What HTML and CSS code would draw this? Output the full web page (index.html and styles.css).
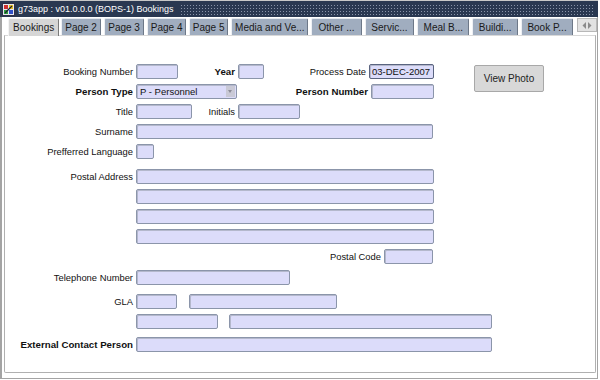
FILE: index.html
```html
<!DOCTYPE html>
<html lang="en">
<head>
    <meta charset="UTF-8">
    <title>g73app : v01.0.0.0 (BOPS-1) Bookings</title>
    <link rel="stylesheet" href="styles.css">
</head>
<body>
<div class="window">
    <div class="titlebar">
        <svg class="app-icon" width="13" height="13" viewBox="0 0 13 13">
            <rect x="0.5" y="0.5" width="12" height="12" fill="#e8e8f0" stroke="#303048"/>
            <rect x="2" y="2" width="4" height="4" fill="#d03030"/>
            <rect x="7" y="2" width="4" height="4" fill="#e8c020"/>
            <rect x="2" y="7" width="4" height="4" fill="#30a040"/>
            <rect x="7" y="7" width="4" height="4" fill="#3050c8"/>
            <path d="M3 10 L10 3" stroke="#202030" stroke-width="1.2"/>
        </svg>
        <span class="title">g73app : v01.0.0.0 (BOPS-1) Bookings</span>
        <div class="dots"></div>
    </div>

    <div class="tabs">
        <div class="tab active t-bookings">Bookings</div>
        <div class="tab t-p2">Page 2</div>
        <div class="tab t-p3">Page 3</div>
        <div class="tab t-p4">Page 4</div>
        <div class="tab t-p5">Page 5</div>
        <div class="tab t-media">Media and Ve...</div>
        <div class="tab t-other">Other ...</div>
        <div class="tab t-serv">Servic...</div>
        <div class="tab t-meal">Meal B...</div>
        <div class="tab t-build">Buildi...</div>
        <div class="tab t-book">Book P...</div>
        <div class="tab-scroll">
            <svg width="10" height="7" viewBox="0 0 10 7">
                <path d="M4 0 L0.5 3.5 L4 7 Z" fill="#8a8a8a"/>
                <path d="M6 0 L9.5 3.5 L6 7 Z" fill="#8a8a8a"/>
            </svg>
        </div>
    </div>

    <div class="panel">
        <div class="form">
            <div class="top">
                <div class="top-rows">
                    <div class="row">
                        <label class="lbl">Booking Number</label>
                        <span class="field w-booking"></span>
                        <label class="lbl bold w-year-l">Year</label>
                        <span class="field w-year"></span>
                        <label class="lbl w-pdate-l">Process Date</label>
                        <span class="field focus w-pdate">03-DEC-2007</span>
                    </div>
                    <div class="row">
                        <label class="lbl bold">Person Type</label>
                        <span class="field select w-ptype">P - Personnel<span class="drop"></span></span>
                        <label class="lbl bold w-pnum-l">Person Number</label>
                        <span class="field w-pnum"></span>
                    </div>
                </div>
                <button class="photo">View Photo</button>
            </div>
            <div class="row">
                <label class="lbl">Title</label>
                <span class="field w-title"></span>
                <label class="lbl w-init-l">Initials</label>
                <span class="field w-init"></span>
            </div>
            <div class="row">
                <label class="lbl">Surname</label>
                <span class="field w-surname"></span>
            </div>
            <div class="row">
                <label class="lbl">Prefferred Language</label>
                <span class="field w-lang"></span>
            </div>
            <div class="row mt-10">
                <label class="lbl">Postal Address</label>
                <span class="field w-addr"></span>
            </div>
            <div class="row">
                <label class="lbl"></label>
                <span class="field w-addr"></span>
            </div>
            <div class="row">
                <label class="lbl"></label>
                <span class="field w-addr"></span>
            </div>
            <div class="row">
                <label class="lbl"></label>
                <span class="field w-addr"></span>
            </div>
            <div class="row">
                <label class="lbl w-pcode-l">Postal Code</label>
                <span class="field w-pcode"></span>
            </div>
            <div class="row mt-6">
                <label class="lbl">Telephone Number</label>
                <span class="field w-tel"></span>
            </div>
            <div class="row mt-9">
                <label class="lbl">GLA</label>
                <span class="field w-gla1"></span>
                <span class="field w-gla2"></span>
            </div>
            <div class="row">
                <label class="lbl"></label>
                <span class="field w-gla3"></span>
                <span class="field w-gla4"></span>
            </div>
            <div class="row mt-8">
                <label class="lbl bold">External Contact Person</label>
                <span class="field w-ext"></span>
            </div>
        </div>
    </div>
</div>
</body>
</html>
```

FILE: styles.css
```css
body {
    margin: 0;
    background: #fff;
    font-family: "Liberation Sans", Arial, sans-serif;
    color: #111;
}
.window {
    width: 598px;
    height: 379px;
    box-sizing: border-box;
    border-left: 2px solid #a4a4a4;
    border-right: 1px solid #a4a4a4;
    border-bottom: 1px solid #a4a4a4;
    margin-right: 2px;
    position: relative;
}

/* title bar */
.titlebar {
    height: 17px;
    display: flex;
    align-items: center;
    background: #2a3851;
    margin-left: -2px;
    margin-right: -1px;
    border-top: 1px solid #c8c8c8;
    box-sizing: border-box;
}
.app-icon {
    margin-left: 2px;
    flex: none;
}
.title {
    color: #fff;
    font-size: 9px;
    margin-left: 3px;
    white-space: nowrap;
}
.dots {
    flex: 1;
    height: 11px;
    margin: 0 4px 0 6px;
    background-image: radial-gradient(circle, #8893a8 0.7px, transparent 1px);
    background-size: 3px 3px;
}

/* tabs */
.tabs {
    height: 18px;
    display: flex;
    align-items: flex-end;
    position: relative;
}
.tab {
    height: 17px;
    box-sizing: border-box;
    background: #a0adbf;
    border-top: 1px solid #e4e8ee;
    border-left: 1px solid #eef0f4;
    border-right: 1px solid #6d7888;
    border-radius: 2px 2px 0 0;
    font-size: 10px;
    color: #1a1a1a;
    display: flex;
    align-items: center;
    justify-content: center;
    white-space: nowrap;
    margin-right: 3px;
}
.tab.active {
    background: #d6d6d6;
    height: 18px;
    border-color: #f4f4f4 #7a7a7a #7a7a7a #f4f4f4;
    margin-bottom: -1px;
    z-index: 1;
}
.t-bookings { width: 52px; margin-left: 6px; margin-right: 2px; }
.t-p2 { width: 40px; }
.t-p3 { width: 41px; }
.t-p4 { width: 39px; }
.t-p5 { width: 40px; }
.t-media { width: 78px; }
.t-other { width: 51px; }
.t-serv { width: 50px; }
.t-meal { width: 53px; }
.t-build { width: 46px; }
.t-book { width: 53px; }
.tab-scroll {
    width: 18px;
    height: 12px;
    margin: 0 0 3px 1px;
    background: #e2e2e2;
    border: 1px solid #b8b8b8;
    display: flex;
    align-items: center;
    justify-content: center;
}

/* panel */
.panel {
    margin: 0 1px 0 2px;
    height: 338px;
    box-sizing: border-box;
    border: 1px solid #b0b0b0;
    border-top-color: #d8d8d8;
    border-radius: 0 0 2px 2px;
    background: #fff;
}
.form {
    padding-top: 28px;
    display: flex;
    flex-direction: column;
    gap: 5px;
}
.top {
    display: flex;
    align-items: flex-start;
}
.top-rows {
    display: flex;
    flex-direction: column;
    gap: 5px;
}
.row {
    display: flex;
    align-items: center;
    height: 15px;
}
.mt-6 { margin-top: 1px; }
.mt-8 { margin-top: 3px; }
.mt-9 { margin-top: 4px; }
.mt-10 { margin-top: 5px; }

.lbl {
    width: 128px;
    margin-right: 3px;
    text-align: right;
    font-size: 9.4px;
    white-space: nowrap;
    flex: none;
}
.lbl.bold {
    font-weight: bold;
    font-size: 9.7px;
}
.field {
    height: 15px;
    box-sizing: border-box;
    background: #dcdcfa;
    border: 1px solid #8b95aa;
    border-radius: 2px;
    box-shadow: inset 1px 1px 0 #b4b8cc;
    flex: none;
    font-size: 9.5px;
    line-height: 13px;
    padding-left: 2px;
    color: #111;
    position: relative;
}
.field.focus {
    border-color: #5a6480;
}
.select {
    padding-left: 3px;
}
.drop {
    position: absolute;
    right: 1px;
    top: 1px;
    width: 9px;
    height: 11px;
    background: #c9c9d6;
}
.drop::after {
    content: "";
    position: absolute;
    left: 2px;
    top: 4px;
    border-left: 2.5px solid transparent;
    border-right: 2.5px solid transparent;
    border-top: 3px solid #8c8c98;
}

.w-booking { width: 42px; }
.w-year-l { width: 57px; }
.w-year { width: 26px; }
.w-pdate-l { width: 102px; }
.w-pdate { width: 65px; }
.w-ptype { width: 101px; }
.w-pnum-l { width: 131px; }
.w-pnum { width: 63px; }
.w-title { width: 56px; }
.w-init-l { width: 43px; }
.w-init { width: 62px; }
.w-surname { width: 297px; }
.w-lang { width: 18px; }
.w-addr { width: 298px; }
.w-pcode-l { width: 376px; }
.w-pcode { width: 49px; }
.w-tel { width: 154px; }
.w-gla1 { width: 41px; margin-right: 12px; }
.w-gla2 { width: 148px; }
.w-gla3 { width: 82px; margin-right: 11px; }
.w-gla4 { width: 263px; }
.w-ext { width: 356px; }

.photo {
    margin: 1px 0 0 40px;
    width: 70px;
    height: 27px;
    background: #d8d8d8;
    border: 1px solid #a8a8a8;
    border-radius: 2px;
    font-family: "Liberation Sans", Arial, sans-serif;
    font-size: 10px;
    color: #222;
    padding: 0;
}
```
